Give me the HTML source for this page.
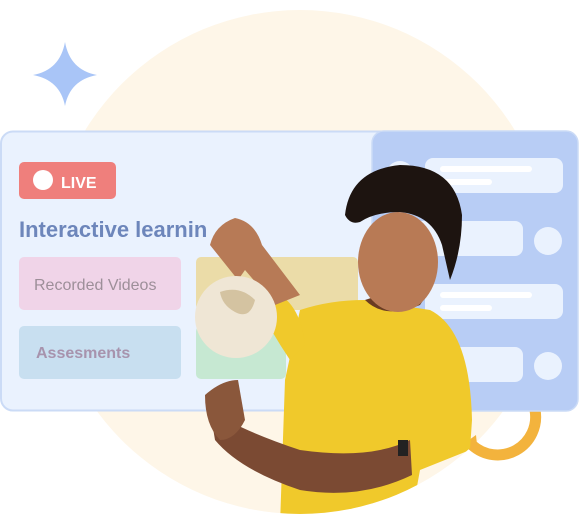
<!DOCTYPE html>
<html><head><style>
html,body{margin:0;padding:0;background:#fff;width:579px;height:525px;overflow:hidden;font-family:"Liberation Sans",sans-serif}
</style></head><body>
<svg width="579" height="525" viewBox="0 0 579 525" xmlns="http://www.w3.org/2000/svg" style="position:absolute;left:0;top:0">
<defs><clipPath id="c"><circle cx="300" cy="262" r="252"/></clipPath></defs>
<circle cx="300" cy="262" r="252" fill="#fef6e8"/>
<path d="M65 42 Q70 70 97 75 Q70 80 65 106 Q60 80 33 75 Q60 70 65 42Z" fill="#a9c5f7"/>
<path d="M535 410 A38 38 0 0 1 472 445" fill="none" stroke="#f3b33d" stroke-width="11"/>
<path d="M462 445 l14 -10 l2 20z" fill="#f3b33d"/>
<rect x="1" y="131.5" width="411" height="279" rx="12" fill="#eaf2fe" stroke="#cbdbf6" stroke-width="2"/>
<rect x="372" y="131" width="206" height="280" rx="12" fill="#b8cdf5" stroke="#cbdbf6" stroke-width="1.5"/>
<circle cx="400" cy="175" r="14" fill="#eaf2fe"/>
<rect x="425" y="158" width="138" height="35" rx="8" fill="#eaf2fe"/>
<rect x="440" y="166" width="92" height="6" rx="3" fill="#fff"/><rect x="440" y="179" width="52" height="6" rx="3" fill="#fff"/>
<rect x="385" y="221" width="138" height="35" rx="8" fill="#eaf2fe"/>
<circle cx="548" cy="241" r="14" fill="#eaf2fe"/>
<rect x="425" y="284" width="138" height="35" rx="8" fill="#eaf2fe"/>
<rect x="440" y="292" width="92" height="6" rx="3" fill="#fff"/><rect x="440" y="305" width="52" height="6" rx="3" fill="#fff"/>
<rect x="385" y="347" width="138" height="35" rx="8" fill="#eaf2fe"/>
<circle cx="548" cy="366" r="14" fill="#eaf2fe"/>
<rect x="19" y="162" width="97" height="37" rx="5" fill="#ef7f7c"/>
<circle cx="43" cy="180" r="10" fill="#fff"/>
<text x="61" y="188" font-size="16" font-weight="bold" fill="#fff">LIVE</text>
<text x="19" y="237" font-size="22" font-weight="bold" fill="#6d86bb">Interactive learnin</text>
<rect x="19" y="257" width="162" height="53" rx="5" fill="#f0d4e8"/>
<text x="34" y="290" font-size="16" fill="#9d8f99">Recorded Videos</text>
<rect x="196" y="257" width="162" height="53" rx="5" fill="#ebdca8"/>
<rect x="19" y="326" width="162" height="53" rx="5" fill="#c8dff0"/>
<text x="36" y="358" font-size="16" font-weight="bold" fill="#a793ad">Assesments</text>
<rect x="196" y="326" width="90" height="53" rx="5" fill="#c6e8d2"/>
<g clip-path="url(#c)">
<path d="M300 310 Q330 300 365 300 L430 310 Q470 330 472 420 L470 450 L420 470 L410 525 L280 525 L285 380 Z" fill="#f0c92b"/>
<path d="M270 290 Q300 300 305 345 L290 360 Q270 330 255 300Z" fill="#f0c92b"/>
<path d="M210 410 Q240 430 300 450 Q370 460 410 440 L412 475 Q360 500 300 490 Q240 470 215 440Z" fill="#7b4a33"/>
<rect x="398" y="440" width="10" height="16" fill="#222"/>
</g>
<path d="M365 300 Q385 320 420 305 L430 290 L395 290Z" fill="#6a3c22"/>
<ellipse cx="398" cy="262" rx="40" ry="50" fill="#b87a55"/>
<path d="M345 215 Q350 170 400 165 Q455 165 462 215 Q462 250 450 280 L442 245 Q432 215 400 212 Q375 212 360 222 Q350 225 345 215Z" fill="#1d1410"/>
<path d="M210 245 Q215 225 235 218 Q255 222 262 245 L300 295 L275 305 L245 270 L238 280 Z" fill="#b77a56"/>
<circle cx="236" cy="317" r="41" fill="#efe6d5"/>
<path d="M220 292 Q240 285 255 300 Q250 320 235 312 Q222 305 220 292Z" fill="#c9b48a" opacity=".7"/>
<path d="M205 395 Q222 380 238 380 L245 420 Q235 440 220 440 Q205 425 205 395Z" fill="#8a573b"/>
</svg>
</body></html>
